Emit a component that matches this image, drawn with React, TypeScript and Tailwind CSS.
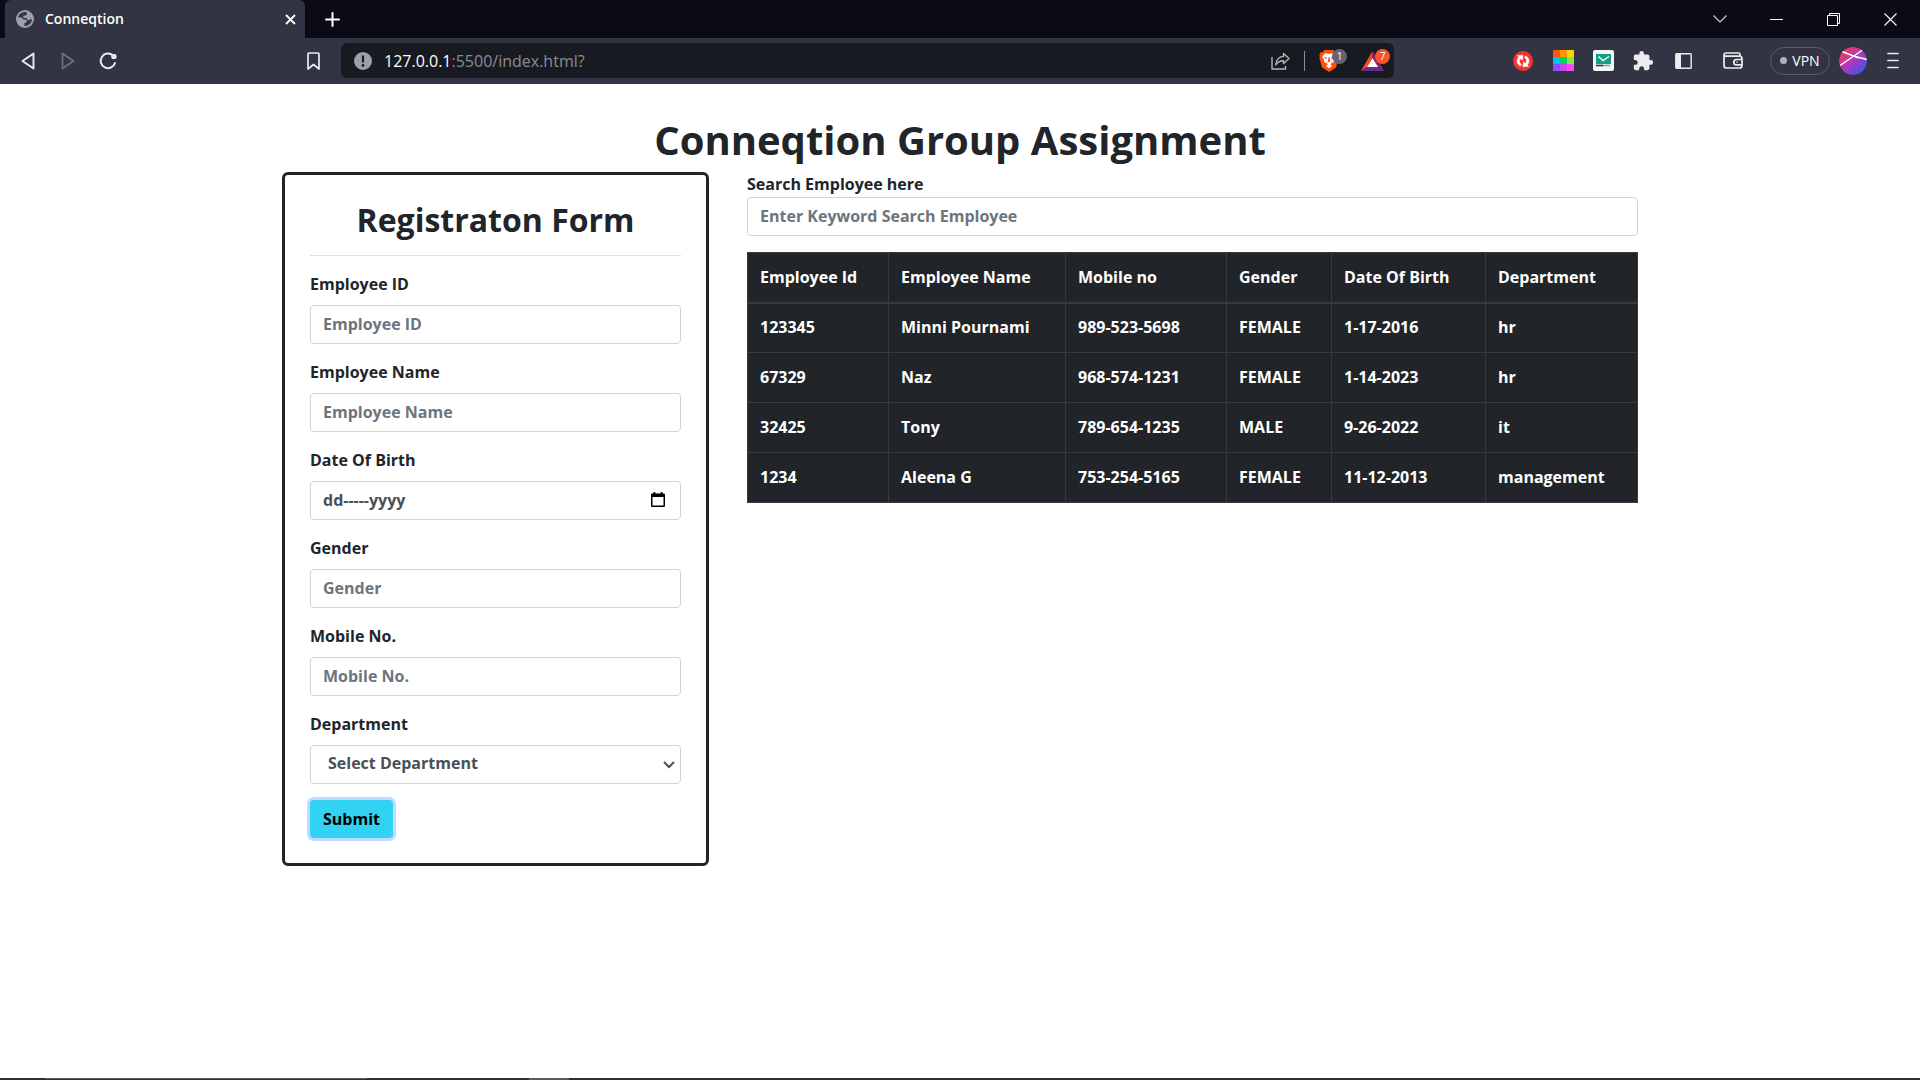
import React from "react";

const columns = [
  { title: "Employee Id", width: "w-[141px]" },
  { title: "Employee Name", width: "w-[177px]" },
  { title: "Mobile no", width: "w-[161px]" },
  { title: "Gender", width: "w-[105px]" },
  { title: "Date Of Birth", width: "w-[154px]" },
  { title: "Department", width: "" },
];

const employees = [
  ["123345", "Minni Pournami", "989-523-5698", "FEMALE", "1-17-2016", "hr"],
  ["67329", "Naz", "968-574-1231", "FEMALE", "1-14-2023", "hr"],
  ["32425", "Tony", "789-654-1235", "MALE", "9-26-2022", "it"],
  ["1234", "Aleena G", "753-254-5165", "FEMALE", "11-12-2013", "management"],
];

const field =
  "h-[39px] w-full rounded border border-[#ced4da] bg-white px-3 pb-0.5 font-bold text-[#495057] outline-none placeholder:text-[#6c757d] placeholder:opacity-100";
const toolButton = "flex h-9 w-10 shrink-0 items-center justify-center";
const windowButton = "flex h-full w-[57px] items-center justify-center";

function TabStrip() {
  return (
    <div className="flex h-[38px] items-center bg-[#0b0b15] pl-[5px] pr-px text-white">
      <div className="flex h-full w-[300px] items-center rounded-t-md bg-[#323443] pl-[11px] pr-[7px]">
        <svg width="18" height="18" viewBox="0 0 18 18" aria-hidden="true">
          <circle cx="9" cy="9" r="9" fill="#9da0a8" />
          <path
            d="M10.6 2.1C7 1.300 3 3.600 2.100 7.500h3.200c.9 0 1.500.6 1.500 1.400v.7h2.300c1 0 1.700.7 1.700 1.600s-.8 1.700-1.800 1.700H8.400v3c4 .3 7.500-2.700 7.500-6.700h-1.800c-.6 1-1.700 1.200-2.600.8l-.8-1.900H8.600c-.8 0-1.300-.7-1.300-1.400V5.500h2c.8 0 1.400-.6 1.400-1.300z"
            fill="#323443"
          />
        </svg>
        <span className="ml-[11px] flex-1 pb-px text-[14px] font-semibold">Conneqtion</span>
        <button type="button" aria-label="Close tab" className="flex h-5 w-4 items-center justify-center">
          <svg width="11" height="11" viewBox="0 0 11 11" stroke="currentColor" strokeWidth="1.800" aria-hidden="true">
            <path d="M1 1l9 9M10 1l-9 9" />
          </svg>
        </button>
      </div>
      <button type="button" aria-label="New tab" className="ml-[11px] flex h-full w-8 items-center justify-center">
        <svg width="15" height="15" viewBox="0 0 15 15" stroke="currentColor" strokeWidth="2" strokeLinecap="round" aria-hidden="true">
          <path d="M7.500 1v13M1 7.500h13" />
        </svg>
      </button>
      <div className="ml-auto flex h-full">
        <button type="button" aria-label="Search tabs" className={windowButton}>
          <svg width="14" height="8" viewBox="0 0 14 8" fill="none" stroke="#d4d4d8" strokeWidth="1.100" aria-hidden="true">
            <path d="M.5.5L7 7 13.500.5" />
          </svg>
        </button>
        <button type="button" aria-label="Minimize" className={windowButton}>
          <svg width="13" height="1" aria-hidden="true">
            <rect width="13" height="1" fill="#fff" />
          </svg>
        </button>
        <button type="button" aria-label="Restore" className={windowButton}>
          <svg width="13" height="13" viewBox="0 0 13 13" fill="none" stroke="#fff" aria-hidden="true">
            <path d="M.5 2.500h10v10H.5zM2.500 2.500v-2h10v10h-2" />
          </svg>
        </button>
        <button type="button" aria-label="Close window" className={windowButton}>
          <svg width="13" height="13" viewBox="0 0 13 13" stroke="#fff" strokeWidth="1.100" aria-hidden="true">
            <path d="M.5.5l12 12M12.500.5l-12 12" />
          </svg>
        </button>
      </div>
    </div>
  );
}

function ShieldIcon() {
  return (
    <svg width="20" height="22" viewBox="0 0 20 22" aria-hidden="true">
      <path d="M5.500 0h9l2 2.200 1.800-.2 1.400 3.200-.5 1.500.4 1.600-2.600 9.200L10 22l-7-4.500L.4 8.300l.4-1.600L.3 5.200 1.700 2l1.800.2z" fill="#fb4f0a" />
      <path d="M6 3.200l4 .6 4-.6 3 3.800-2.200 2.700.3 2-2.700 1.800-1.200 1 2 1.600L10 18.300l-3.200-2.200 2-1.600-1.200-1-2.700-1.800.3-2L3 7z" fill="#fff" />
      <path d="M5 6.800l3 .8-.8 1.800zM15 6.800l-3 .8.8 1.800zM9.300 7.500h1.400l.4 4-1.100.9-1.100-.9zM7 12l2 1.200H7.500zM13 12l-2 1.200h1.500z" fill="#fb4f0a" />
    </svg>
  );
}

function Toolbar() {
  return (
    <div className="flex h-[46px] items-center bg-[#323443] pl-2 pr-[7px] pb-px text-[#ececef]">
      <button type="button" aria-label="Back" className={toolButton}>
        <svg width="14" height="18" viewBox="0 0 14 18" fill="none" stroke="currentColor" strokeWidth="1.900" strokeLinejoin="round" aria-hidden="true">
          <path d="M12.500 1.500v15L1.500 9z" />
        </svg>
      </button>
      <button type="button" aria-label="Forward" className={toolButton}>
        <svg width="14" height="18" viewBox="0 0 14 18" fill="none" stroke="#6d6f7b" strokeWidth="1.700" strokeLinejoin="round" aria-hidden="true">
          <path d="M1.500 1.500v15L12.500 9z" />
        </svg>
      </button>
      <button type="button" aria-label="Reload" className={toolButton}>
        <svg width="18" height="18" viewBox="0 0 18 18" fill="none" stroke="currentColor" strokeWidth="2" strokeLinecap="round" aria-hidden="true">
          <path d="M14 3.500A7.300 7.300 0 1 0 16 11" />
          <path d="M12.500 3.200l4.500-1v4.600h-4.300z" fill="currentColor" stroke="none" />
          <circle cx="15" cy="4.500" r="2.600" fill="currentColor" stroke="none" />
        </svg>
      </button>
      <button type="button" aria-label="Bookmark" className={toolButton + " ml-[165px]"}>
        <svg width="13" height="18" viewBox="0 0 13 18" fill="none" stroke="currentColor" strokeWidth="1.700" strokeLinejoin="round" aria-hidden="true">
          <path d="M1 2.200Q1 1 2.200 1h8.600Q12 1 12 2.200V17l-5.500-4.500L1 17z" />
        </svg>
      </button>
      <div className="ml-2 flex h-[35px] min-w-0 flex-1 items-center rounded-md bg-[#181a21] pl-[13px] pr-1">
        <svg width="18" height="18" viewBox="0 0 18 18" aria-hidden="true">
          <circle cx="9" cy="9" r="9" fill="#9da0a8" />
          <path d="M7.900 3.500h2.200v7H7.900z" fill="#181a21" />
          <circle cx="9" cy="13.500" r="1.400" fill="#181a21" />
        </svg>
        <a href="#" className="ml-3 flex-1 text-[16px] text-[#8b8d92]">
          <span className="text-white">127.0.0.1</span>:5500/index.html?
        </a>
        <button type="button" aria-label="Share" className="flex h-8 w-6 items-center justify-center">
          <svg width="19" height="18" viewBox="0 0 19 18" fill="none" stroke="#b3b4b8" strokeWidth="1.400" aria-hidden="true">
            <path d="M1 5v12h13.500v-3" />
            <path d="M12.500 1.500l5.500 5-5.500 5V8.800C9 8.700 6.500 10 4.800 13c.3-5 3-8.200 7.700-8.600z" strokeLinejoin="round" />
          </svg>
        </button>
        <span className="ml-3 h-5 w-px bg-[#8b8d92]" />
        <button type="button" aria-label="Shields" className="relative ml-[14px] h-[22px] w-[30px]">
          <ShieldIcon />
          <span className="absolute -top-px left-[13px] flex h-[15px] w-[15px] items-center justify-center rounded-full bg-[#636574] text-[10px] text-white">1</span>
        </button>
        <button type="button" aria-label="Rewards" className="relative ml-3 h-5 w-[29px]">
          <svg width="23" height="20" viewBox="0 0 23 20" aria-hidden="true">
            <path d="M11.500 0v6.800L6 16l-6 4z" fill="#ff4724" />
            <path d="M11.500 0L23 20l-6-4-5.500-9.200z" fill="#9e1f63" />
            <path d="M0 20l6-4h11l6 4z" fill="#662d91" />
            <path d="M11.500 7L17 16H6z" fill="#fff" />
          </svg>
          <span className="absolute -top-[2px] left-[14px] flex h-[15px] w-[15px] items-center justify-center rounded-full bg-[#fb542b] text-[10px] text-white">7</span>
        </button>
      </div>
      <button type="button" aria-label="Sync extension" className={toolButton + " ml-[109px]"}>
        <svg width="20" height="20" viewBox="0 0 20 20" aria-hidden="true">
          <circle cx="10" cy="10" r="10" fill="#fb3030" />
          <path d="M7.500 15C3.500 13.500 3 8.500 6 6L4.300 4.700 10 4.200l-.6 5L7.800 7.600C6 9 5.900 12 8.500 13.400zM12.500 5c4 1.500 4.500 6.500 1.500 9l1.700 1.300-5.700.5.6-5 1.600 1.600c1.800-1.400 1.900-4.400-.7-5.800z" fill="#fff" stroke="#fff" strokeWidth=".6" />
        </svg>
      </button>
      <button type="button" aria-label="Colors extension" className={toolButton}>
        <svg width="21" height="21" viewBox="0 0 21 21" shapeRendering="crispEdges" aria-hidden="true">
          <path d="M0 0h7v7H0z" fill="#ff5500" />
          <path d="M7 0h7v7H7z" fill="#ff9500" />
          <path d="M14 0h7v7h-7z" fill="#ffd500" />
          <path d="M0 7h7v7H0z" fill="#00bfff" />
          <path d="M7 7h7v7H7z" fill="#00d563" />
          <path d="M14 7h7v7h-7z" fill="#80e650" />
          <path d="M0 14h7v7H0z" fill="#8a4dff" />
          <path d="M7 14h7v7H7z" fill="#c745f5" />
          <path d="M14 14h7v7h-7z" fill="#ff45ff" />
        </svg>
      </button>
      <button type="button" aria-label="Mail extension" className={toolButton}>
        <svg width="21" height="21" viewBox="0 0 21 21" aria-hidden="true">
          <rect width="21" height="21" rx="2" fill="#f4f6f6" />
          <rect x="3" y="4" width="15" height="10" fill="#159f85" />
          <path d="M5.500 6.500l4.500 4 6-4" fill="none" stroke="#fff" strokeWidth="1.400" />
          <path d="M3 15.500h7" stroke="#27343c" strokeWidth="1.600" />
          <path d="M10 15.500h7" stroke="#58b9a8" strokeWidth="1.600" />
        </svg>
      </button>
      <button type="button" aria-label="Extensions" className={toolButton}>
        <svg width="22" height="22" viewBox="0 0 24 24" fill="currentColor" aria-hidden="true">
          <path d="M20.500 11H19V7c0-1.100-.9-2-2-2h-4V3.500a2.500 2.500 0 0 0-5 0V5H4c-1.100 0-1.990.9-1.990 2v3.800H3.500c1.490 0 2.700 1.210 2.700 2.700s-1.210 2.700-2.700 2.700H2V20c0 1.100.9 2 2 2h3.800v-1.500c0-1.490 1.210-2.700 2.700-2.700s2.700 1.210 2.700 2.700V22H17c1.100 0 2-.9 2-2v-4h1.500a2.500 2.500 0 0 0 0-5z" />
        </svg>
      </button>
      <button type="button" aria-label="Sidebar" className={toolButton}>
        <svg width="17" height="16" viewBox="0 0 17 16" aria-hidden="true">
          <rect x=".8" y=".8" width="15.400" height="14.400" rx=".8" fill="none" stroke="currentColor" strokeWidth="1.400" />
          <path d="M1 1h5v14H1z" fill="currentColor" />
        </svg>
      </button>
      <button type="button" aria-label="Wallet" className={toolButton + " ml-[10px]"}>
        <svg width="20" height="17" viewBox="0 0 20 17" fill="none" stroke="currentColor" strokeWidth="1.700" strokeLinejoin="round" aria-hidden="true">
          <path d="M17 4V2.500Q17 1 15.500 1h-12Q1 1 1 3v10.500Q1 16 3.500 16h13q2.500 0 2.500-2.500V6.500Q19 4.200 16.500 4.200H3Q1 4 1 3" />
          <path d="M19 7.500h-5.500a2.700 2.700 0 0 0 0 5.400H19M13.500 10.200h1" />
        </svg>
      </button>
      <button type="button" className="ml-[17px] flex h-7 w-[60px] shrink-0 items-center justify-center gap-[5px] rounded-full border border-[#5b5d6e] text-[14px] text-white">
        <span className="h-[7px] w-[7px] rounded-full bg-[#b0b1c0]" />
        VPN
      </button>
      <button type="button" aria-label="Profile" className="ml-[9px] shrink-0">
        <svg width="28" height="28" viewBox="0 0 28 28" aria-hidden="true">
          <defs>
            <linearGradient id="avatar" x1="0.100" y1="0.100" x2="0.850" y2="0.900">
              <stop offset="0" stopColor="#ed4059" />
              <stop offset=".45" stopColor="#b836b4" />
              <stop offset="1" stopColor="#4055e8" />
            </linearGradient>
            <clipPath id="disc">
              <circle cx="14" cy="14" r="14" />
            </clipPath>
          </defs>
          <g clipPath="url(#disc)">
            <circle cx="14" cy="14" r="14" fill="url(#avatar)" />
            <path d="M1 18.500L23.500 3M3 4.500L14.500 9l13.500 3.500M14.500 9l5 2" stroke="#fff" strokeWidth="1.500" fill="none" />
          </g>
        </svg>
      </button>
      <button type="button" aria-label="Menu" className={toolButton + " ml-[6px]"}>
        <svg width="12" height="17" viewBox="0 0 12 17" stroke="currentColor" strokeWidth="1.700" strokeLinecap="round" aria-hidden="true">
          <path d="M1 1.500h10M1 8.500h10M1 15.500h10" />
        </svg>
      </button>
    </div>
  );
}

function TextField({ id, label }: { id: string; label: string }) {
  return (
    <div className="mb-4">
      <label htmlFor={id} className="mb-2 block">{label}</label>
      <input id={id} type="text" placeholder={label} className={field} />
    </div>
  );
}

function RegistrationForm() {
  return (
    <form
      className="w-[427px] shrink-0 rounded-md border-3 border-[#212529] p-[25px]"
      onSubmit={(event) => event.preventDefault()}
    >
      <h2 className="mb-[15px] text-center text-[32px] leading-10">Registraton Form</h2>
      <hr className="mb-4 border-[#dedfe0]" />
      <TextField id="employee-id" label="Employee ID" />
      <TextField id="employee-name" label="Employee Name" />
      <div className="mb-4">
        <label htmlFor="birth-date" className="mb-2 block">Date Of Birth</label>
        <div className="relative">
          <input id="birth-date" type="text" defaultValue="dd-----yyyy" className={field} />
          <button type="button" aria-label="Pick a date" className="absolute right-4 top-[11px]">
            <svg width="14" height="15" viewBox="0 0 14 15" aria-hidden="true">
              <path d="M2.500 0h1.800v1.500h5.400V0h1.800v1.500H13q1 0 1 1V14q0 1-1 1H1q-1 0-1-1V2.500q0-1 1-1h1.500zM1.500 5v8.500h11V5z" fill="#000" fillRule="evenodd" />
            </svg>
          </button>
        </div>
      </div>
      <TextField id="gender" label="Gender" />
      <TextField id="mobile" label="Mobile No." />
      <div className="mb-4">
        <label htmlFor="department" className="mb-2 block">Department</label>
        <div className="relative">
          <select id="department" className="h-[39px] w-full appearance-none rounded border border-[#ced4da] bg-white px-[17px] pb-0.5 font-bold text-[#495057] outline-none">
            <option>Select Department</option>
            <option>hr</option>
            <option>it</option>
            <option>management</option>
          </select>
          <svg className="pointer-events-none absolute right-[6px] top-4" width="12" height="8" viewBox="0 0 12 8" fill="none" stroke="#495057" strokeWidth="2" aria-hidden="true">
            <path d="M1 1l5 5 5-5" />
          </svg>
        </div>
      </div>
      <button type="submit" className="block h-[38px] rounded bg-[#31d2f2] px-[13px] text-black ring-3 ring-[#bfdbff]">
        Submit
      </button>
    </form>
  );
}

function EmployeeTable() {
  return (
    <table className="w-full table-fixed border-collapse bg-[#212529] text-left text-white">
      <thead>
        <tr className="h-[50px]">
          {columns.map((column) => (
            <th key={column.title} scope="col" className={column.width + " border border-b-2 border-[#373b3e] px-3"}>
              {column.title}
            </th>
          ))}
        </tr>
      </thead>
      <tbody>
        {employees.map((row) => (
          <tr key={row[0]} className="h-[50px]">
            {row.map((cell, index) => (
              <td key={index} className="border border-[#373b3e] px-3">{cell}</td>
            ))}
          </tr>
        ))}
      </tbody>
    </table>
  );
}

export default function App() {
  return (
    <div className="flex min-h-screen flex-col bg-white">
      <header className="font-['Open_Sans',sans-serif]">
        <TabStrip />
        <Toolbar />
      </header>
      <main className="mx-auto w-full max-w-[1356px] flex-1 pt-8 font-['Open_Sans',sans-serif] text-[16px] leading-[25px] font-bold text-[#212529]">
        <h1 className="mb-2 text-center text-[40px] leading-[48px]">Conneqtion Group Assignment</h1>
        <div className="flex items-start gap-[38px]">
          <RegistrationForm />
          <section className="min-w-0 flex-1">
            <label htmlFor="search" className="block">Search Employee here</label>
            <input id="search" type="search" placeholder="Enter Keyword Search Employee" className={field + " mb-4"} />
            <EmployeeTable />
          </section>
        </div>
      </main>
      <footer className="flex h-0.5 bg-[#302e2f]">
        <div className="ml-[45px] h-px w-[322px] bg-[#5c5b5b]" />
        <div className="ml-[162px] w-10 bg-[#5c5a5b]" />
      </footer>
    </div>
  );
}
